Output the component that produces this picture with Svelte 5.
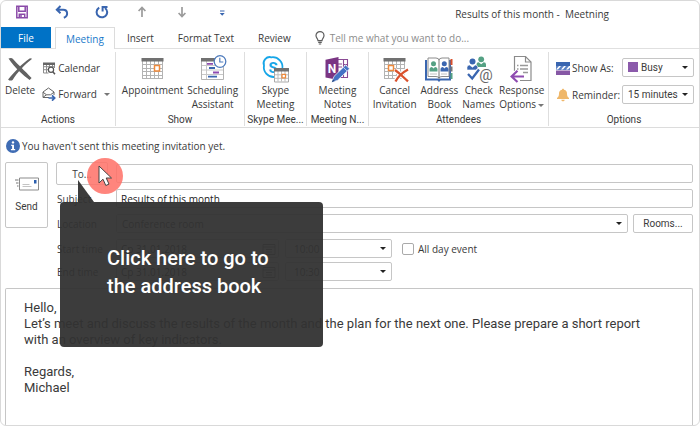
<script>
  let subject = $state('Results of this month');
  let location = $state('Conference room');
  let message = $state(
    "Hello,\nLet’s meet and discuss the results of the month and the plan for the next one. Please prepare a short report with an overview of key indicators.\n\nRegards,\nMichael"
  );
  let allDay = $state(false);
  let activeTab = $state('Meeting');

  const quickActions = [
    { name: 'Save', icon: saveIcon },
    { name: 'Undo', icon: undoIcon },
    { name: 'Redo', icon: redoIcon },
    { name: 'Previous item', icon: upIcon },
    { name: 'Next item', icon: downIcon },
    { name: 'Customize toolbar', icon: moreIcon }
  ];

  const tabs = ['Meeting', 'Insert', 'Format Text', 'Review'];

  const groups = [
    {
      name: 'Show',
      buttons: [
        { lines: ['Appointment'], icon: appointmentIcon },
        { lines: ['Scheduling', 'Assistant'], icon: schedulingIcon }
      ]
    },
    { name: 'Skype Mee...', buttons: [{ lines: ['Skype', 'Meeting'], icon: skypeIcon }] },
    { name: 'Meeting N...', buttons: [{ lines: ['Meeting', 'Notes'], icon: notesIcon }] },
    {
      name: 'Attendees',
      buttons: [
        { lines: ['Cancel', 'Invitation'], icon: cancelIcon },
        { lines: ['Address', 'Book'], icon: addressIcon },
        { lines: ['Check', 'Names'], icon: checkIcon },
        { lines: ['Response', 'Options'], icon: responseIcon, menu: true }
      ]
    }
  ];

  const times = [
    { id: 'start', label: 'Start time', date: 'Ср 31.01.2018', time: '10:00' },
    { id: 'end', label: 'End time', date: 'Ср 31.01.2018', time: '10:30' }
  ];
</script>

{#snippet saveIcon()}
  <svg width="14" height="14" viewBox="0 0 14 14" fill="none" stroke="#8a4aa8" stroke-width="1.5">
    <path d="M1.8 1.3h10.4v11.4H1.8zM3.8 1.5v4.7h6.4V1.5M4.3 12.5V9.3h5.4v3.2" />
    <path d="M6 10v2.5" />
  </svg>
{/snippet}

{#snippet undoIcon()}
  <svg width="14" height="14" viewBox="0 0 14 14" fill="none" stroke="#3a66b0" stroke-width="2">
    <path d="M5.5 1 1.8 4.7l3.7 3.6M2 4.7h6.2c5 0 5.2 6.6.6 8" />
  </svg>
{/snippet}

{#snippet redoIcon()}
  <svg width="14" height="14" viewBox="0 0 14 14" fill="none" stroke="#3a66b0" stroke-width="2">
    <path d="M4.2 2.6C1 4.6.8 8.8 3.4 11c2.7 2.2 6.8 1.5 8.2-1.5 1.1-2.5.3-5-1.6-6.5M7.6 6.4V2h4.9" />
  </svg>
{/snippet}

{#snippet upIcon()}
  <svg width="14" height="14" viewBox="0 0 14 14" fill="none" stroke="#9b9b9b" stroke-width="1.7">
    <path d="M7 12V2.5M3.6 6 7 2.5 10.4 6" />
  </svg>
{/snippet}

{#snippet downIcon()}
  <svg width="14" height="14" viewBox="0 0 14 14" fill="none" stroke="#9b9b9b" stroke-width="1.7">
    <path d="M7 2v9.5M3.6 8 7 11.5 10.4 8" />
  </svg>
{/snippet}

{#snippet moreIcon()}
  <svg width="14" height="14" viewBox="0 0 14 14" fill="#3a66b0">
    <path d="M5 5.500h4.500v1H5zM4.700 8h5L7.200 10.700z" />
  </svg>
{/snippet}

{#snippet calendarGrid()}
  <path d="M3 6h21v18H3z" fill="#fff" />
  <path d="M3.5 6v18M7.5 6v18M11.5 6v18M15.5 6v18M19.5 6v18M23.5 6v18M3 9.500h21M3 13.500h21M3 16.500h21M3 20.500h21M3 23.500h21" stroke="#b3b3b3" />
  <path d="M2.500 3h22v3.500h-22z" fill="#717171" />
{/snippet}

{#snippet deleteIcon()}
  <svg width="28" height="28" viewBox="0 0 28 28" fill="#626262">
    <path d="M2.500 3.600c2-1 3.500-.8 4.500.4 5.300 6 11.200 11.200 18.600 19l-2 2C17 20.400 9 13 2.500 3.600z" />
    <path d="M24 3.300l2.200.5C19 9.500 11.600 17 6.600 25c-1.200.9-3.300.8-4.500-.6C8 18 15.500 8.600 24 3.300z" />
  </svg>
{/snippet}

{#snippet appointmentIcon()}
  <svg width="28" height="28" viewBox="0 0 28 28" fill="none">
    {@render calendarGrid()}
    <path d="M15.500 10.500h5v5.500h-5z" fill="#fff" stroke="#ee8a3c" stroke-width="1.500" />
  </svg>
{/snippet}

{#snippet schedulingIcon()}
  <svg width="28" height="28" viewBox="0 0 28 28" fill="none">
    <path d="M2.500 6v18.500h22V6" fill="#fff" stroke="#b3b3b3" />
    <path d="M7.500 6v18M3 10.500h21M3 15h21M3 19.500h21" stroke="#c8c8c8" />
    <path d="M2 3h22.500v3.500H2z" fill="#717171" />
    <path d="M14 17.500h6M8 8.800h6" stroke="#8e4bb0" stroke-width="1.800" />
    <path d="M10 13h6M9 21.700h9" stroke="#3a66b0" stroke-width="1.800" />
    <circle cx="21" cy="6.500" r="5.800" fill="#fff" stroke="#4f7cbd" stroke-width="1.300" />
    <path d="M20.800 2.800v4.200h3.500" stroke="#4f7cbd" stroke-width="1.200" />
  </svg>
{/snippet}

{#snippet skypeIcon()}
  <svg width="28" height="28" viewBox="0 0 28 28" fill="none">
    <path d="M3 10.500A6.200 6.200 0 0 1 10.500 2.300a9.800 9.800 0 0 1 10.800 11.600A6.200 6.200 0 0 1 13 22 9.800 9.800 0 0 1 3 10.500z" fill="#fff" stroke="#17a6e8" stroke-width="1.800" />
    <text x="12" y="17.500" class="mark" font-size="15" fill="#17a6e8">S</text>
    <path d="M13.500 13.500h14V27h-14z" fill="#fff" stroke="#aaa" />
    <path d="M17 16v10.500M20.500 16v10.500M24 16v10.500M14 19.800h13M14 23.300h13" stroke="#bdbdbd" />
    <path d="M13 13h15v3.500H13z" fill="#717171" />
    <path d="M21 19.300h3.500v3.500H21z" fill="#fff" stroke="#ee8a3c" stroke-width="1.300" />
  </svg>
{/snippet}

{#snippet notesIcon()}
  <svg width="28" height="28" viewBox="0 0 28 28" fill="none">
    <path d="M14 4.500h10.500v18H14M20.500 5v17M20.500 9.500h4M20.500 14h4M15 9h4M15 12h4" fill="#fff" stroke="#8a4a94" stroke-width="1.100" />
    <path d="M2.500 4.700 15.500 2v23L2.500 22.600z" fill="#7a3583" />
    <text x="9" y="18" class="mark" font-size="12" fill="#fff">N</text>
    <path d="M8.800 27.200 11 21.400 22.600 10l4 3.800L14.400 25.400z" fill="#4472c4" stroke="#fff" stroke-width=".7" />
    <path d="m8.800 27.200 1.100-3 2 1.900z" fill="#274b86" />
    <path d="m20.200 12.200 4 3.900" stroke="#b7cbed" />
  </svg>
{/snippet}

{#snippet cancelIcon()}
  <svg width="28" height="28" viewBox="0 0 28 28" fill="none">
    {@render calendarGrid()}
    <path d="M7.500 10.500h5v5h-5z" fill="#fff" stroke="#ee8a3c" stroke-width="1.500" />
    <path d="M14 15c5 3.500 8.500 7.500 13 11.300M27 14.500C21.500 17.500 17 21.500 14.500 26.500" stroke="#fff" stroke-width="4.500" />
    <path d="M14 15c5 3.500 8.500 7.500 13 11.300M27 14.500C21.500 17.500 17 21.500 14.500 26.500" stroke="#d9512c" stroke-width="2.300" />
  </svg>
{/snippet}

{#snippet addressIcon()}
  <svg width="28" height="28" viewBox="0 0 28 28" fill="none">
    <path d="M1 5v19.500h12l1 1 1-1h10V5" fill="#fff" stroke="#3a66b0" stroke-width="2" />
    <path d="M3 3h8q3 0 3 2.500Q14 3 17 3h7v18.500h-7q-3 0-3 2-0-2-3-2H3z" fill="#fff" stroke="#8b8b8b" />
    <path d="M14 5.500v18" stroke="#777" />
    <circle cx="8.500" cy="8.800" r="2.500" fill="#55a184" />
    <path d="M4.500 16.500v-2q0-2.500 2.500-2.500l1.500 1.500L10 12q2.500 0 2.500 2.500v2z" fill="#55a184" />
    <circle cx="19.300" cy="8.800" r="2.500" fill="#3a66b0" />
    <path d="M15.500 16.500v-2q0-2.500 2.500-2.500l1.300 1.500L21 12q2.500 0 2.500 2.500v2z" fill="#3a66b0" />
    <path d="M5 19h7M16 19h6" stroke="#c2c2c2" />
    <path d="M26.500 4v6" stroke="#d9512c" stroke-width="2" />
    <path d="M26.500 11.500v5" stroke="#777" stroke-width="2" />
    <path d="M26.500 18v6" stroke="#55a184" stroke-width="2" />
  </svg>
{/snippet}

{#snippet checkIcon()}
  <svg width="28" height="28" viewBox="0 0 28 28" fill="none">
    <circle cx="16.200" cy="4.300" r="2.900" fill="#55a184" />
    <path d="M11.500 12V9.500q0-2.200 2.200-2.200l2.500 2 2.500-2q2.300 0 2.300 2.200V12z" fill="#55a184" />
    <circle cx="7.500" cy="6.500" r="3" fill="#3a66b0" />
    <path d="M2 15v-2.500q0-2.500 2.500-2.500l3 2.300L10.300 10q2.500 0 2.500 2.500V15z" fill="#3a66b0" stroke="#fff" stroke-width=".6" />
    <path d="m3 19.500 4 4.500 7-9.500" stroke="#fff" stroke-width="4.500" />
    <path d="m3 19 4.200 4.500 6.800-9" stroke="#3a66b0" stroke-width="2.300" />
    <text x="21" y="25" class="at" font-size="15" fill="#666">@</text>
  </svg>
{/snippet}

{#snippet responseIcon()}
  <svg width="28" height="28" viewBox="0 0 28 28" fill="none">
    <path d="M6.500 16V1.500h11l5.500 5.500v18.500H12" fill="#fff" stroke="#8b8b8b" stroke-width="1.200" />
    <path d="M17.500 1.500V7H23" stroke="#8b8b8b" stroke-width="1.200" />
    <path d="M9 10.500h1.500M9 14h1.500M12 10.500h8M12 14h8M15 17.500h5" stroke="#999" stroke-width="1.300" />
    <path d="M16 21.500H3.500M9.500 15.800 3.600 21.500l5.900 5.500" stroke="#fff" stroke-width="4" />
    <path d="M16 21.500H3.500M9.500 15.800 3.600 21.500l5.900 5.500" stroke="#8e4bb0" stroke-width="2.200" />
  </svg>
{/snippet}

<div class="window">
  <header class="titlebar">
    <div class="quick">
      {#each quickActions as { name, icon }}
        <button class="quick-btn" aria-label={name}>{@render icon()}</button>
      {/each}
    </div>
    <span class="title">Results of this month -&nbsp; Meetning</span>
  </header>

  <nav class="tabs">
    <button class="tab file">File</button>
    {#each tabs as tab}
      <button class="tab" class:active={activeTab === tab} onclick={() => (activeTab = tab)}>{tab}</button>
    {/each}
    <button class="tell">
      <svg width="10" height="14" viewBox="0 0 10 14" fill="none" stroke="#5c5c5c" stroke-width="1.200">
        <path d="M3 9.700C3 7.700 1 7 1 4.600a4 4 0 0 1 8 0C9 7 7 7.700 7 9.700zM3.200 11.300h3.600M3.800 13h2.400" />
      </svg>
      Tell me what you want to do...
    </button>
  </nav>

  <div class="ribbon">
    <section class="group">
      <div class="actions">
        <button class="big">{@render deleteIcon()}<span>Delete</span></button>
        <div class="stack">
          <button class="small">
            <svg width="14" height="14" viewBox="0 0 14 14" fill="none">
              <path d="M1.500 3v9h5M1.500 5.700h11M1.500 8.700h5M4.500 3v9M7.500 3v3M10.500 3v3M12.500 3v4" stroke="#8d8d8d" />
              <path d="M1 1.500h12V4H1z" fill="#666" />
              <circle cx="9" cy="8.800" r="2.600" fill="#fff" stroke="#555" stroke-width="1.200" />
              <path d="m10.800 10.700 2.200 2.500" stroke="#555" stroke-width="1.500" />
            </svg>
            Calendar
          </button>
          <button class="small">
            <svg width="14" height="14" viewBox="0 0 14 14" fill="none">
              <path d="M7 10.500H1V5l5.500-4L12 5v3M1 5.200l3.500 2.600h4L12 5.200M1 10.300l3.500-2.500" stroke="#666" />
              <path d="M6.500 11h6M10 8.300l2.700 2.700-2.700 2.700" stroke="#3a66b0" stroke-width="1.700" />
            </svg>
            Forward
            <i class="arrow faint"></i>
          </button>
        </div>
      </div>
      <h2>Actions</h2>
    </section>

    {#each groups as group}
      <section class="group">
        <div class="buttons">
          {#each group.buttons as { lines, icon, menu }}
            <button class="big">
              {@render icon()}
              {#each lines as line, i}
                <span>{line}{#if menu && i === 1}<i class="arrow faint"></i>{/if}</span>
              {/each}
            </button>
          {/each}
        </div>
        <h2>{group.name}</h2>
      </section>
    {/each}

    <section class="group">
      <div class="options">
        <label for="show-as">
          <svg width="14" height="14" viewBox="0 0 14 14">
            <path d="M0 1h14v4H0z" fill="#3a66b0" />
            <path d="M0 5h14v4H0z" fill="#5c82c4" />
            <path d="m0 8.500 3-3.500h2L2 8.500zM5 8.500 8 5h2L7 8.500zM10 8.500 13 5h1v1.500l-2 2z" fill="#fff" />
            <path d="M0 9.500h14V14H0z" fill="#8657a5" />
          </svg>
          Show As:
        </label>
        <div class="select">
          <b class="swatch"></b>
          <select id="show-as" class="with-swatch">
            <option>Busy</option>
            <option>Free</option>
            <option>Tentative</option>
          </select>
        </div>
        <label for="reminder">
          <svg width="14" height="14" viewBox="0 0 14 14" fill="#efb76a">
            <path d="M7 .8c.8 0 1 .5 1 1 2.300.5 3 2 3 4 0 2.500.8 3.500 2 4.200v1H1v-1c1.200-.7 2-1.700 2-4.200 0-2 .7-3.500 3-4 0-.5.200-1 1-1zM5.300 11.700h3.400c-.3 2-3.100 2-3.400 0z" />
          </svg>
          Reminder:
        </label>
        <div class="select">
          <select id="reminder">
            <option>15 minutes</option>
            <option>30 minutes</option>
          </select>
        </div>
      </div>
      <h2>Options</h2>
    </section>
  </div>

  <p class="notice">
    <svg width="14" height="14" viewBox="0 0 14 14">
      <circle cx="7" cy="7" r="7" fill="#3f6cb4" />
      <circle cx="7" cy="3.400" r="1.200" fill="#fff" />
      <path d="M5 5.700h3v4.300h1.200v1.200H4.900V10h1.200V6.800H5z" fill="#fff" />
    </svg>
    You haven't sent this meeting invitation yet.
  </p>

  <main class="form">
    <button class="send">
      <svg width="26" height="14" viewBox="0 0 26 14" fill="none">
        <path d="M5.500 1h19v12h-19z" fill="#fff" stroke="#8b8b8b" />
        <path d="M20 3h2.500v3.500H20z" fill="#2b5fae" />
        <path d="M8.500 7.500h7M8.500 9.500h9" stroke="#c4c4c4" />
        <path d="M1 3h3.500M2 6h2.500M3 9h1.500" stroke="#777" />
      </svg>
      Send
    </button>

    <div class="fields">
      <div class="row">
        <div class="to">
          <button class="to-btn">To...</button>
          <div class="callout" role="tooltip">Click here to go to<br />the address book</div>
          <div class="pointer">
            <svg width="16" height="22" viewBox="0 0 16 22">
              <path d="M2 1v17l4-3.800 2.800 6.300 3.200-1.400-2.800-6.100h5.300z" fill="#fff" stroke="#444" />
            </svg>
          </div>
        </div>
        <input aria-label="To" />
      </div>

      <div class="row">
        <label for="subject">Subject</label>
        <input id="subject" bind:value={subject} />
      </div>

      <div class="row">
        <label for="location">Location</label>
        <div class="select wide">
          <select id="location" bind:value={location}>
            <option>Conference room</option>
          </select>
        </div>
        <button class="rooms">Rooms...</button>
      </div>

      <div class="times">
        {#each times as { id, label, date, time }}
          <div class="row">
            <label for="{id}-date">{label}</label>
            <div class="date">
              <input id="{id}-date" value={date} />
              <svg width="14" height="14" viewBox="0 0 14 14" fill="none" stroke="#777">
                <path d="M1 2.500h12v10H1zM1 5h12M4 7.500h6M4 10h6" />
              </svg>
            </div>
            <div class="select time">
              <select aria-label="{label} hour">
                <option>{time}</option>
              </select>
            </div>
            {#if id === 'start'}
              <label class="all-day">
                <input type="checkbox" bind:checked={allDay} />
                All day event
              </label>
            {/if}
          </div>
        {/each}
      </div>
    </div>
  </main>

  <textarea class="message" aria-label="Message" bind:value={message}></textarea>
</div>

<style>
  :global(body) {
    background: #fff;
  }
  .window {
    --ui: "Open Sans", "Noto Sans", sans-serif;
    --line: #c6c6c6;
    box-sizing: border-box;
    display: flex;
    flex-direction: column;
    min-height: 100vh;
    border: 1px solid #d9d9d9;
    border-radius: 6px;
    overflow: hidden;
    background: #fff;
    color: #3a3a3a;
    font: 10px/14px var(--ui);
  }
  button,
  input,
  select,
  textarea {
    box-sizing: border-box;
    margin: 0;
    padding: 0;
    border: 0;
    border-radius: 0;
    background: none;
    color: inherit;
    font: inherit;
    outline: none;
  }
  button {
    white-space: nowrap;
    cursor: pointer;
  }
  svg {
    display: block;
    flex: none;
  }
  .mark {
    font-family: Roboto, sans-serif;
    font-weight: 700;
    text-anchor: middle;
  }
  .at {
    font-family: Roboto, sans-serif;
    text-anchor: middle;
  }

  .titlebar {
    display: flex;
    justify-content: space-between;
    align-items: center;
    height: 26px;
    padding: 0 90px 4px 1px;
    box-sizing: border-box;
  }
  .quick {
    display: flex;
  }
  .quick-btn {
    display: flex;
    justify-content: center;
    width: 40px;
  }
  .title {
    padding-top: 4px;
  }

  .tabs {
    display: flex;
    height: 21px;
    border-bottom: 1px solid #e0e0e0;
  }
  .tab {
    padding: 0 12px;
  }
  .file {
    width: 50px;
    margin-right: 4px;
    background: #0072c6;
    color: #fff;
  }
  .active {
    height: 22px;
    padding: 0 10px;
    border: 1px solid #dcdcdc;
    border-bottom: 0;
    background: #fff;
    color: #1979ca;
  }
  .tell {
    display: flex;
    align-items: center;
    gap: 5px;
    margin-left: 12px;
    color: #8c8c8c;
  }

  .ribbon {
    display: grid;
    grid-template-columns: 115px 129px 62px 62px 180px 1fr;
    height: 79px;
    padding-top: 3px;
    box-sizing: border-box;
    border-bottom: 1px solid #dcdcdc;
  }
  .group {
    display: flex;
    flex-direction: column;
    justify-content: space-between;
    height: 74px;
    border-right: 1px solid #dedede;
    min-width: 0;
  }
  .group:last-child {
    border-right: 0;
  }
  .group h2 {
    margin: 0;
    text-align: center;
    white-space: nowrap;
    font: 10px/12px Roboto, sans-serif;
  }
  .buttons {
    display: flex;
    justify-content: center;
    gap: 4px;
  }
  .big {
    display: flex;
    flex-direction: column;
    align-items: center;
    padding-top: 3px;
  }
  .actions {
    display: flex;
    gap: 7px;
    padding-left: 4px;
  }
  .stack {
    display: flex;
    flex-direction: column;
    gap: 12px;
    padding-top: 9px;
  }
  .small {
    display: flex;
    align-items: center;
    gap: 2px;
  }
  .arrow {
    display: inline-block;
    border: 3px solid transparent;
    border-top-color: #222;
    border-bottom: 0;
  }
  .arrow.faint {
    border-top-color: #777;
    margin-left: 2px;
    vertical-align: middle;
  }
  .small .arrow {
    margin-left: 5px;
  }
  .options {
    display: grid;
    grid-template-columns: auto 72px;
    justify-content: space-between;
    align-items: center;
    row-gap: 8px;
    padding: 6px 5px 0 7px;
  }
  .options label {
    display: flex;
    align-items: center;
    gap: 2px;
    white-space: nowrap;
  }
  .options select {
    font-family: Roboto, sans-serif;
  }

  .select {
    position: relative;
    display: flex;
  }
  .select::after {
    content: "";
    position: absolute;
    right: 6px;
    top: 8px;
    border: 3px solid transparent;
    border-top-color: #222;
    border-bottom: 0;
    pointer-events: none;
  }
  select {
    appearance: none;
    width: 100%;
    height: 19px;
    padding: 0 5px;
    border: 1px solid var(--line);
    border-radius: 2px;
  }
  .with-swatch {
    padding-left: 18px;
  }
  .swatch {
    position: absolute;
    left: 6px;
    top: 4px;
    width: 10px;
    height: 10px;
    background: #8b5aab;
  }

  .notice {
    display: flex;
    align-items: center;
    gap: 2px;
    margin: 11px 5px 9px;
  }

  .form {
    display: flex;
    align-items: flex-start;
    gap: 8px;
    padding: 0 6px 7px 4px;
  }
  .send {
    display: flex;
    flex-direction: column;
    align-items: center;
    justify-content: center;
    gap: 9px;
    width: 43px;
    height: 66px;
    border: 1px solid var(--line);
    border-radius: 2px;
    font-family: Roboto, sans-serif;
  }
  .fields {
    flex: 1;
    display: flex;
    flex-direction: column;
    gap: 6px;
    padding-top: 2px;
  }
  .times {
    display: flex;
    flex-direction: column;
    gap: 4px;
  }
  .row {
    display: flex;
    align-items: center;
    height: 19px;
  }
  .row > label:first-child {
    width: 59px;
    padding-left: 1px;
  }
  .row input:not([type="checkbox"]) {
    flex: 1;
    min-width: 0;
    height: 19px;
    padding: 0 4px;
    border: 1px solid var(--line);
    border-radius: 2px;
    color: #222;
  }
  .to {
    position: relative;
    width: 60px;
  }
  .to-btn {
    width: 52px;
    height: 23px;
    border: 1px solid var(--line);
    border-radius: 2px;
  }
  .wide {
    flex: 1;
  }
  .rooms {
    width: 60px;
    height: 19px;
    margin-left: 5px;
    border: 1px solid var(--line);
    border-radius: 2px;
    font-family: Roboto, sans-serif;
  }
  .date {
    position: relative;
    display: flex;
    width: 163px;
  }
  .date svg {
    position: absolute;
    right: 3px;
    top: 3px;
  }
  .time {
    width: 107px;
    margin-left: 6px;
  }
  .time select {
    padding-left: 8px;
  }
  .all-day {
    display: flex;
    align-items: center;
    gap: 4px;
    margin-left: 10px;
  }
  .all-day input {
    appearance: none;
    width: 12px;
    height: 12px;
    border: 1px solid #aaa;
    border-radius: 2px;
  }
  .all-day input:checked {
    background: #0072c6;
  }

  .callout {
    position: absolute;
    z-index: 1;
    left: 4px;
    top: 40px;
    box-sizing: border-box;
    width: 263px;
    height: 145px;
    padding: 42px 47px;
    border-radius: 4px;
    background: rgba(50, 50, 50, 0.95);
    color: #fff;
    font: 500 20px/28px Roboto, sans-serif;
    white-space: nowrap;
  }
  .callout::before {
    content: "";
    position: absolute;
    left: 18px;
    bottom: 100%;
    width: 16px;
    height: 22px;
    background: inherit;
    clip-path: polygon(0 0, 100% 100%, 0 100%);
  }
  .pointer {
    position: absolute;
    z-index: 2;
    left: 31px;
    top: -4px;
    display: flex;
    align-items: center;
    justify-content: center;
    width: 36px;
    height: 36px;
    border-radius: 50%;
    background: rgba(255, 112, 102, 0.85);
    pointer-events: none;
  }

  .message {
    flex: 1;
    min-height: 137px;
    margin: 0 6px 0 4px;
    padding: 11px 40px 0 18px;
    border: 1px solid var(--line);
    border-bottom: 0;
    border-radius: 2px 2px 0 0;
    overflow: hidden;
    resize: none;
    font: 13px/16px Roboto, sans-serif;
  }
</style>
